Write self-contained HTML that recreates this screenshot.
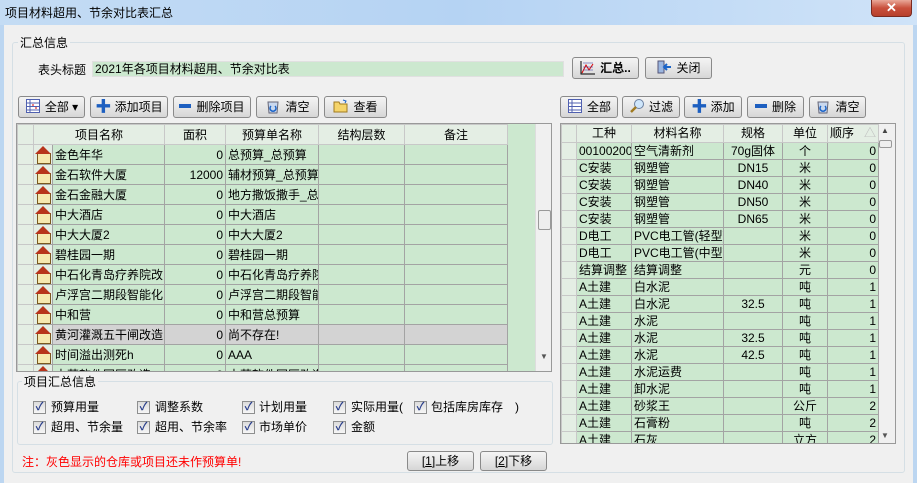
<!DOCTYPE html>
<html><head><meta charset="utf-8">
<style>
*{box-sizing:border-box;margin:0;padding:0}
body{width:917px;height:483px;overflow:hidden;background:#f0f0f0;font-family:"Liberation Sans","Noto Sans CJK SC",sans-serif;font-size:12px;color:#000;position:relative}
.a{position:absolute}
.title{left:0;top:0;width:917px;height:25px;background:linear-gradient(90deg,#c4dcf4,#b5d3f3 50%,#cfe3f8);}
.title span{position:absolute;left:5px;top:4px;font-size:12px}
.close{left:871px;top:0;width:41px;height:17px;background:linear-gradient(#e9a899,#c9503c 50%,#b7402c);border:1px solid #7a2a20;border-top:none;border-radius:0 0 4px 4px;color:#fff;font-weight:bold;text-align:center;font-size:13px;line-height:15px}
.lb{left:0;top:25px;width:4px;height:458px;background:#bcd6f1}
.rb{left:913px;top:25px;width:4px;height:458px;background:#bcd6f1}
.grp{border:1px solid #d5dfe5;border-radius:3px}
.btn{position:absolute;height:22px;border:1px solid #8a8a8a;border-radius:3px;background:linear-gradient(#f4f4f4,#e6e6e6 50%,#d6d6d6);font-size:12px;line-height:20px;text-align:center;white-space:nowrap}
.ic{display:inline-block;width:16px;height:16px;vertical-align:-3px;margin-right:4px}
.inp{left:92px;top:61px;width:472px;height:16px;background:#cce8cf;border:1px solid #e0e0e0;line-height:14px;padding-left:2px}
table{border-collapse:collapse;table-layout:fixed}
td{border:1px solid #a3a3a3;white-space:nowrap;overflow:hidden;padding:0 2px;background:#cce8cf}
td.ind{background:#e4eee4;border-color:#c8c8c8}
tr.h td{background:#e4eee4;text-align:center;border-color:#c8c8c8}
.g td.n{text-align:right}
.lg td{height:20px;line-height:18px}
.rg td{height:17px;line-height:15px;font-size:12px}
.rg tr.h td{height:18px}
.cb{position:absolute;width:13px;height:13px;border:1px solid #8e8f8f;background:linear-gradient(#dcdcdc,#f6f6f6);color:#2a3f8c;font-size:11px;line-height:11px;text-align:center;font-weight:bold}
.cl{position:absolute}
.sb{background:#f0f0f0;border-left:1px solid #ddd}
td.hs{background:#e4eee4;position:relative;padding:0}
td.hs::before{content:"";position:absolute;left:3px;top:8px;width:12px;height:9px;background:#f6e8b0;border:1px solid #7a5a20}
td.hs::after{content:"";position:absolute;left:1px;top:1px;width:0;height:0;border-left:8px solid transparent;border-right:8px solid transparent;border-bottom:8px solid #b8341c}
.c{text-align:center}
</style></head><body>
<div class="a title"><span>项目材料超用、节余对比表汇总</span></div>
<div class="a close">✕</div>
<div class="a lb"></div><div class="a rb"></div>
<div class="a grp" style="left:12px;top:42px;width:893px;height:431px"></div>
<div class="a" style="left:18px;top:34px;background:#f0f0f0;padding:0 2px">汇总信息</div>
<div class="a" style="left:38px;top:61px">表头标题</div>
<div class="a inp">2021年各项目材料超用、节余对比表</div>
<div class="btn" style="left:572px;top:57px;width:67px"><svg class="ic" viewBox="0 0 16 16"><path d="M1 2v13h14" stroke="#000" fill="none"/><path d="M2 14L6 6l3 5 4-6" stroke="#d00" fill="none"/><path d="M3 4h10M3 8h10M3 11h10" stroke="#339" stroke-width=".6"/></svg><b>汇总..</b></div>
<div class="btn" style="left:645px;top:57px;width:67px"><svg class="ic" viewBox="0 0 16 16"><rect x="2" y="2" width="6" height="12" fill="#9bb6e0" stroke="#557"/><path d="M15 8H9M11 5L8 8l3 3" stroke="#1b64c8" stroke-width="2" fill="none"/></svg>关闭</div>

<div class="btn" style="left:18px;top:96px;width:67px"><svg class="ic" viewBox="0 0 16 16"><rect x="1.5" y="1.5" width="13" height="13" fill="#fff" stroke="#5060b0"/><path d="M1.5 5h13M1.5 8.5h13M1.5 12h13M5 1.5v13" stroke="#5060b0"/><path d="M7 7h2M10 10h2" stroke="#d00"/></svg>全部 ▾</div>
<div class="btn" style="left:90px;top:96px;width:78px"><span style="color:#1d5fc0;font-weight:bold;font-size:16px;vertical-align:-1px">✚</span> 添加项目</div>
<div class="btn" style="left:173px;top:96px;width:78px"><span style="display:inline-block;width:12px;height:4px;background:#1d5fc0;vertical-align:3px;margin-right:5px"></span>删除项目</div>
<div class="btn" style="left:256px;top:96px;width:63px"><svg class="ic" viewBox="0 0 16 16"><path d="M3 4h10l-1 11H4z" fill="#c9d8ef" stroke="#667"/><path d="M6 8a3 3 0 1 0 4 0" stroke="#1b64c8" stroke-width="1.5" fill="none"/></svg>清空</div>
<div class="btn" style="left:324px;top:96px;width:63px"><svg class="ic" viewBox="0 0 16 16"><path d="M1 4h5l1 2h7v8H1z" fill="#f5d46a" stroke="#a07a20"/><path d="M10 2l3 1-1 2" stroke="#1b64c8" fill="none"/></svg>查看</div>

<div class="a" style="left:16px;top:123px;width:536px;height:249px;border:1px solid #999;background:#cce8cf;overflow:hidden">
<table class="g lg" style="width:490px">
<colgroup><col style="width:16px"><col style="width:19px"><col style="width:112px"><col style="width:61px"><col style="width:93px"><col style="width:86px"><col style="width:103px"></colgroup>
<tr class="h"><td style="height:18px"></td><td colspan="2">项目名称</td><td>面积</td><td>预算单名称</td><td>结构层数</td><td>备注</td></tr>
<tr><td class="ind"></td><td class="hs"></td><td>金色年华</td><td class="n">0</td><td>总预算_总预算</td><td></td><td></td></tr>
<tr><td class="ind"></td><td class="hs"></td><td>金石软件大厦</td><td class="n">12000</td><td>辅材预算_总预算</td><td></td><td></td></tr>
<tr><td class="ind"></td><td class="hs"></td><td>金石金融大厦</td><td class="n">0</td><td>地方撒饭撒手_总</td><td></td><td></td></tr>
<tr><td class="ind"></td><td class="hs"></td><td>中大酒店</td><td class="n">0</td><td>中大酒店</td><td></td><td></td></tr>
<tr><td class="ind"></td><td class="hs"></td><td>中大大厦2</td><td class="n">0</td><td>中大大厦2</td><td></td><td></td></tr>
<tr><td class="ind"></td><td class="hs"></td><td>碧桂园一期</td><td class="n">0</td><td>碧桂园一期</td><td></td><td></td></tr>
<tr><td class="ind"></td><td class="hs"></td><td>中石化青岛疗养院改</td><td class="n">0</td><td>中石化青岛疗养院</td><td></td><td></td></tr>
<tr><td class="ind"></td><td class="hs"></td><td>卢浮宫二期段智能化</td><td class="n">0</td><td>卢浮宫二期段智能</td><td></td><td></td></tr>
<tr><td class="ind"></td><td class="hs"></td><td>中和营</td><td class="n">0</td><td>中和营总预算</td><td></td><td></td></tr>
<tr><td class="ind"></td><td class="hs"></td><td style="background:#d3d3d3">黄河灌溉五干闸改造</td><td class="n" style="background:#d3d3d3">0</td><td style="background:#d3d3d3">尚不存在!</td><td style="background:#d3d3d3"></td><td style="background:#d3d3d3"></td></tr>
<tr><td class="ind"></td><td class="hs"></td><td>时间溢出测死h</td><td class="n">0</td><td>AAA</td><td></td><td></td></tr>
<tr><td class="ind"></td><td class="hs"></td><td>中草软件园区改造</td><td class="n">0</td><td>中草软件园区改造</td><td></td><td></td></tr>
</table>
<div class="a sb" style="left:518px;top:0;width:17px;height:249px"><div class="a" style="left:2px;top:86px;width:13px;height:20px;border:1px solid #999;border-radius:2px;background:#eee"></div><div class="a" style="left:4px;top:228px;font-size:8px;color:#555">▼</div></div>
</div>

<div class="a grp" style="left:17px;top:381px;width:536px;height:64px"></div>
<div class="a" style="left:22px;top:373px;background:#f0f0f0;padding:0 2px">项目汇总信息</div>
<div class="cb" style="left:33px;top:401px">✓</div><div class="cl" style="left:51px;top:398px">预算用量</div>
<div class="cb" style="left:137px;top:401px">✓</div><div class="cl" style="left:155px;top:398px">调整系数</div>
<div class="cb" style="left:242px;top:401px">✓</div><div class="cl" style="left:259px;top:398px">计划用量</div>
<div class="cb" style="left:333px;top:401px">✓</div><div class="cl" style="left:351px;top:398px">实际用量(</div>
<div class="cb" style="left:414px;top:401px">✓</div><div class="cl" style="left:431px;top:398px">包括库房库存　)</div>
<div class="cb" style="left:33px;top:421px">✓</div><div class="cl" style="left:51px;top:418px">超用、节余量</div>
<div class="cb" style="left:137px;top:421px">✓</div><div class="cl" style="left:155px;top:418px">超用、节余率</div>
<div class="cb" style="left:242px;top:421px">✓</div><div class="cl" style="left:259px;top:418px">市场单价</div>
<div class="cb" style="left:333px;top:421px">✓</div><div class="cl" style="left:351px;top:418px">金额</div>
<div class="a" style="left:22px;top:453px;color:#f00">注：灰色显示的仓库或项目还未作预算单!</div>
<div class="btn" style="left:407px;top:451px;width:67px;height:20px;line-height:18px">[<u>1</u>]上移</div>
<div class="btn" style="left:480px;top:451px;width:67px;height:20px;line-height:18px">[<u>2</u>]下移</div>

<div class="btn" style="left:560px;top:96px;width:58px"><svg class="ic" viewBox="0 0 16 16"><rect x="1.5" y="1.5" width="13" height="13" fill="#fff" stroke="#5060b0"/><path d="M1.5 5h13M1.5 8.5h13M1.5 12h13M5 1.5v13" stroke="#5060b0"/></svg>全部</div>
<div class="btn" style="left:622px;top:96px;width:58px"><svg class="ic" viewBox="0 0 16 16"><circle cx="10" cy="6" r="4.5" fill="#cfe6fb" stroke="#6a7fa0"/><path d="M7 9l-5 5" stroke="#a07a20" stroke-width="2.5"/></svg>过滤</div>
<div class="btn" style="left:684px;top:96px;width:58px"><span style="color:#1d5fc0;font-weight:bold;font-size:16px;vertical-align:-1px">✚</span> 添加</div>
<div class="btn" style="left:747px;top:96px;width:57px"><span style="display:inline-block;width:12px;height:4px;background:#1d5fc0;vertical-align:3px;margin-right:5px"></span>删除</div>
<div class="btn" style="left:809px;top:96px;width:57px"><svg class="ic" viewBox="0 0 16 16"><path d="M3 4h10l-1 11H4z" fill="#c9d8ef" stroke="#667"/><path d="M6 8a3 3 0 1 0 4 0" stroke="#1b64c8" stroke-width="1.5" fill="none"/></svg>清空</div>

<div class="a" style="left:560px;top:123px;width:336px;height:321px;border:1px solid #999;background:#f0f0f0;overflow:hidden">
<table class="g rg" style="width:317px">
<colgroup><col style="width:15px"><col style="width:55px"><col style="width:92px"><col style="width:59px"><col style="width:45px"><col style="width:51px"></colgroup>
<tr class="h"><td></td><td>工种</td><td>材料名称</td><td>规格</td><td>单位</td><td style="text-align:left">顺序 <span style="color:#bbb;float:right">△</span></td></tr>
<tr><td class="ind"></td><td>00100200:</td><td>空气清新剂</td><td class="c">70g固体</td><td class="c">个</td><td class="n">0</td></tr>
<tr><td class="ind"></td><td>C安装</td><td>钢塑管</td><td class="c">DN15</td><td class="c">米</td><td class="n">0</td></tr>
<tr><td class="ind"></td><td>C安装</td><td>钢塑管</td><td class="c">DN40</td><td class="c">米</td><td class="n">0</td></tr>
<tr><td class="ind"></td><td>C安装</td><td>钢塑管</td><td class="c">DN50</td><td class="c">米</td><td class="n">0</td></tr>
<tr><td class="ind"></td><td>C安装</td><td>钢塑管</td><td class="c">DN65</td><td class="c">米</td><td class="n">0</td></tr>
<tr><td class="ind"></td><td>D电工</td><td>PVC电工管(轻型)</td><td></td><td class="c">米</td><td class="n">0</td></tr>
<tr><td class="ind"></td><td>D电工</td><td>PVC电工管(中型)</td><td></td><td class="c">米</td><td class="n">0</td></tr>
<tr><td class="ind"></td><td>结算调整</td><td>结算调整</td><td></td><td class="c">元</td><td class="n">0</td></tr>
<tr><td class="ind"></td><td>A土建</td><td>白水泥</td><td></td><td class="c">吨</td><td class="n">1</td></tr>
<tr><td class="ind"></td><td>A土建</td><td>白水泥</td><td class="c">32.5</td><td class="c">吨</td><td class="n">1</td></tr>
<tr><td class="ind"></td><td>A土建</td><td>水泥</td><td></td><td class="c">吨</td><td class="n">1</td></tr>
<tr><td class="ind"></td><td>A土建</td><td>水泥</td><td class="c">32.5</td><td class="c">吨</td><td class="n">1</td></tr>
<tr><td class="ind"></td><td>A土建</td><td>水泥</td><td class="c">42.5</td><td class="c">吨</td><td class="n">1</td></tr>
<tr><td class="ind"></td><td>A土建</td><td>水泥运费</td><td></td><td class="c">吨</td><td class="n">1</td></tr>
<tr><td class="ind"></td><td>A土建</td><td>卸水泥</td><td></td><td class="c">吨</td><td class="n">1</td></tr>
<tr><td class="ind"></td><td>A土建</td><td>砂浆王</td><td></td><td class="c">公斤</td><td class="n">2</td></tr>
<tr><td class="ind"></td><td>A土建</td><td>石膏粉</td><td></td><td class="c">吨</td><td class="n">2</td></tr>
<tr><td class="ind"></td><td>A土建</td><td>石灰</td><td></td><td class="c">立方</td><td class="n">2</td></tr>
</table>
<div class="a" style="left:320px;top:2px;font-size:8px;color:#444">▲</div>
<div class="a" style="left:318px;top:16px;width:13px;height:8px;border:1px solid #999;border-radius:2px;background:#eee"></div>
<div class="a" style="left:320px;top:307px;font-size:8px;color:#555">▼</div>
</div>
</body></html>
